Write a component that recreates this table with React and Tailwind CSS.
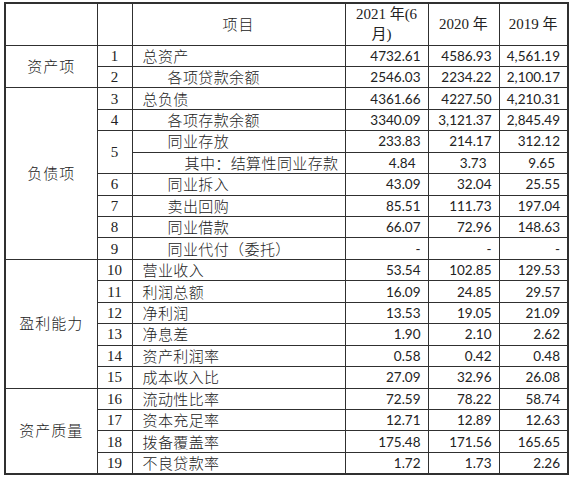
import React from "react";

const data = [
  { g: "资产项", gs: 2, n: "1", label: "总资产", ind: 0, v: ["4732.61", "4586.93", "4,561.19"] },
  { n: "2", label: "各项贷款余额", ind: 1, v: ["2546.03", "2234.22", "2,100.17"] },
  { g: "负债项", gs: 8, n: "3", label: "总负债", ind: 0, v: ["4361.66", "4227.50", "4,210.31"] },
  { n: "4", label: "各项存款余额", ind: 1, v: ["3340.09", "3,121.37", "2,845.49"] },
  { n: "5", ns: 2, label: "同业存放", ind: 1, v: ["233.83", "214.17", "312.12"] },
  { skipN: true, label: "其中：结算性同业存款", ind: 2, v: ["4.84", "3.73", "9.65"], sub: true },
  { n: "6", label: "同业拆入", ind: 1, v: ["43.09", "32.04", "25.55"] },
  { n: "7", label: "卖出回购", ind: 1, v: ["85.51", "111.73", "197.04"] },
  { n: "8", label: "同业借款", ind: 1, v: ["66.07", "72.96", "148.63"] },
  { n: "9", label: "同业代付（委托）", ind: 1, v: ["-", "-", "-"] },
  { g: "盈利能力", gs: 6, n: "10", label: "营业收入", ind: 0, v: ["53.54", "102.85", "129.53"] },
  { n: "11", label: "利润总额", ind: 0, v: ["16.09", "24.85", "29.57"] },
  { n: "12", label: "净利润", ind: 0, v: ["13.53", "19.05", "21.09"] },
  { n: "13", label: "净息差", ind: 0, v: ["1.90", "2.10", "2.62"] },
  { n: "14", label: "资产利润率", ind: 0, v: ["0.58", "0.42", "0.48"] },
  { n: "15", label: "成本收入比", ind: 0, v: ["27.09", "32.96", "26.08"] },
  { g: "资产质量", gs: 4, n: "16", label: "流动性比率", ind: 0, v: ["72.59", "78.22", "58.74"] },
  { n: "17", label: "资本充足率", ind: 0, v: ["12.71", "12.89", "12.63"] },
  { n: "18", label: "拨备覆盖率", ind: 0, v: ["175.48", "171.56", "165.65"] },
  { n: "19", label: "不良贷款率", ind: 0, v: ["1.72", "1.73", "2.26"] },
];

const cell = "border border-[#303030] p-0";
const cjk = "font-['Noto_Sans_CJK_SC',sans-serif] font-light";
const indCls = ["pl-[10px]", "pl-[35px]", "pl-[52px]"];

export default function App() {
  return (
    <div className="w-[570px] h-[480px] bg-white pt-[2px] pl-[4px] text-[#222]">
      <table className="border-collapse table-fixed w-[563px] border-2 border-[#303030]">
        <colgroup>
          <col className="w-[92px]" />
          <col className="w-[35px]" />
          <col className="w-[213px]" />
          <col className="w-[83px]" />
          <col className="w-[71px]" />
          <col className="w-[69px]" />
        </colgroup>
        <tbody>
          <tr className="h-[42px]">
            <td className={cell}></td>
            <td className={cell}></td>
            <td className={`${cell} ${cjk} text-[15px] text-center tracking-[1px]`}>项目</td>
            <td className={`${cell} font-['Liberation_Serif','Noto_Sans_CJK_SC',serif] text-[15px] leading-[20px] text-center`}>
              <div>2021 年(6</div>
              <div className="pr-[10px]">月)</div>
            </td>
            <td className={`${cell} font-['Liberation_Serif','Noto_Sans_CJK_SC',serif] text-[15px] text-center`}>2020 年</td>
            <td className={`${cell} font-['Liberation_Serif','Noto_Sans_CJK_SC',serif] text-[15px] text-center`}>2019 年</td>
          </tr>
          {data.map((r, i) => (
            <tr key={i} className="h-[21.45px]">
              {r.g && (
                <td rowSpan={r.gs} className={`${cell} ${cjk} text-[15px] text-center tracking-[1px]`}>
                  {r.g}
                </td>
              )}
              {!r.skipN && (
                <td rowSpan={r.ns || 1} className={`${cell} font-['Liberation_Serif',serif] text-[15px] text-center leading-[20px]`}>
                  {r.n}
                </td>
              )}
              <td className={`${cell} ${cjk} text-[15px] leading-[20px] tracking-[0.4px] ${indCls[r.ind]}`}>
                {r.label}
              </td>
              {r.v.map((x, j) => (
                <td
                  key={j}
                  className={`${cell} font-['Lato',sans-serif] text-[13.5px] leading-[20px] text-right ${
                    r.sub ? "pr-[12px]" : "pr-[7px]"
                  }`}
                >
                  {x}
                </td>
              ))}
            </tr>
          ))}
        </tbody>
      </table>
    </div>
  );
}
